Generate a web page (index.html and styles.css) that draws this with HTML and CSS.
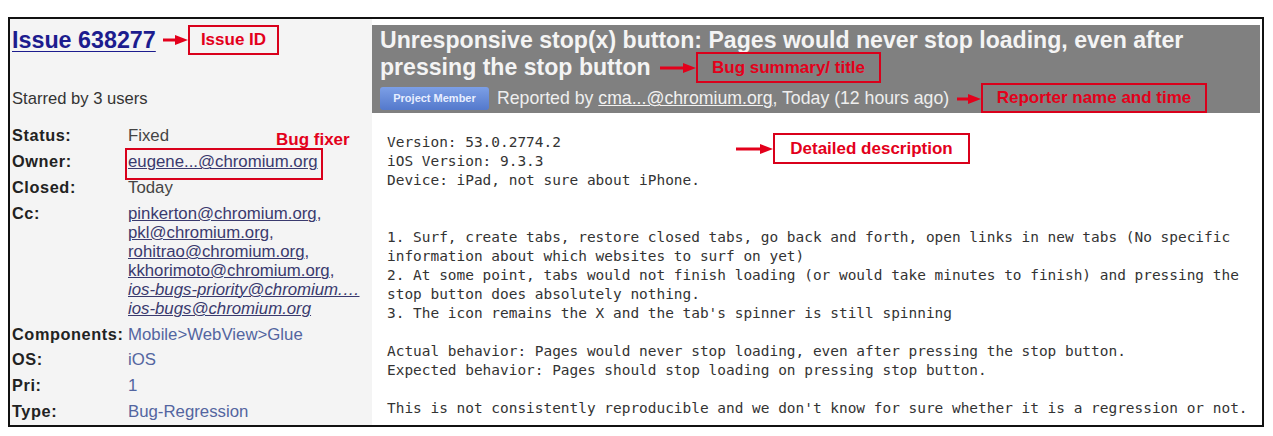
FILE: index.html
```html
<!DOCTYPE html>
<html>
<head>
<meta charset="utf-8">
<link rel="stylesheet" href="styles.css">
</head>
<body>
<div class="frame">
  <div class="side">
    <a class="issue-id" href="#">Issue 638277</a>
    <div class="starred">Starred by 3 users</div>
    <div class="meta">
      <div class="label">Status:</div><div class="val plain">Fixed</div>
      <div class="label">Owner:</div><div class="val"><a href="#">eugene...@chromium.org</a></div>
      <div class="label">Closed:</div><div class="val plain">Today</div>
      <div class="label">Cc:</div>
      <div class="val cc">
        <a href="#">pinkerton@chromium.org</a>,<br>
        <a href="#">pkl@chromium.org</a>,<br>
        <a href="#">rohitrao@chromium.org</a>,<br>
        <a href="#">kkhorimoto@chromium.org</a>,<br>
        <a class="it" href="#">ios-bugs-priority@chromium.…</a><br>
        <a class="it" href="#">ios-bugs@chromium.org</a>
      </div>
      <div class="label">Components:</div><div class="val blue">Mobile&gt;WebView&gt;Glue</div>
      <div class="label">OS:</div><div class="val blue">iOS</div>
      <div class="label">Pri:</div><div class="val blue">1</div>
      <div class="label">Type:</div><div class="val blue">Bug-Regression</div>
    </div>
  </div>
  <div class="main">
    <div class="head">
      <div class="title">Unresponsive stop(x) button: Pages would never stop loading, even after pressing the stop button</div>
      <div class="reported"><span class="badge">Project Member</span><span class="rep">Reported by <a href="#">cma...@chromium.org</a>, Today (12 hours ago)</span></div>
    </div>
    <pre class="desc">Version: 53.0.2774.2
iOS Version: 9.3.3
Device: iPad, not sure about iPhone.


1. Surf, create tabs, restore closed tabs, go back and forth, open links in new tabs (No specific
information about which websites to surf on yet)
2. At some point, tabs would not finish loading (or would take minutes to finish) and pressing the
stop button does absolutely nothing.
3. The icon remains the X and the tab's spinner is still spinning

Actual behavior: Pages would never stop loading, even after pressing the stop button.
Expected behavior: Pages should stop loading on pressing stop button.

This is not consistently reproducible and we don't know for sure whether it is a regression or not.</pre>
  </div>

  <svg class="arrow a-issue" width="25" height="12" viewBox="0 0 25 12"><path d="M0 6H14" stroke="#e3001b" stroke-width="3"/><path d="M12 1L25 6L12 11Z" fill="#e3001b"/></svg>
  <div class="note n-issue">Issue ID</div>

  <svg class="arrow a-summary" width="36" height="12" viewBox="0 0 36 12"><path d="M0 6H25" stroke="#e3001b" stroke-width="3"/><path d="M23 1L36 6L23 11Z" fill="#e3001b"/></svg>
  <div class="note n-summary">Bug summary/ title</div>

  <svg class="arrow a-reporter" width="24" height="12" viewBox="0 0 24 12"><path d="M0 6H13" stroke="#e3001b" stroke-width="3"/><path d="M11 1L24 6L11 11Z" fill="#e3001b"/></svg>
  <div class="note n-reporter">Reporter name and time</div>

  <svg class="arrow a-desc" width="37" height="12" viewBox="0 0 37 12"><path d="M0 6H26" stroke="#e3001b" stroke-width="3"/><path d="M24 1L37 6L24 11Z" fill="#e3001b"/></svg>
  <div class="note n-desc">Detailed description</div>

  <div class="fixer">Bug fixer</div>
  <div class="owner-box"></div>
</div>
</body>
</html>
```
FILE: styles.css
```css
html, body {
  margin: 0;
  padding: 0;
  background: #fff;
}
body {
  font-family: "Liberation Sans", Arial, sans-serif;
  color: #333;
}
.frame {
  position: relative;
  box-sizing: border-box;
  margin: 17px 0 0 8px;
  width: 1256px;
  height: 410px;
  border: 2px solid #111;
  display: flex;
  padding-right: 2px;
  overflow: hidden;
}
.side {
  width: 362px;
  flex: none;
  background: #f4f4f4;
  padding-left: 2px;
  box-sizing: border-box;
}
.issue-id {
  display: block;
  margin-top: 6px;
  height: 30px;
  line-height: 30px;
  font-size: 23.3px;
  font-weight: bold;
  color: #1c1c8e;
  text-decoration: underline;
  text-decoration-thickness: 1px;
  text-underline-offset: 3px;
  width: max-content;
}
.starred {
  margin-top: 34px;
  line-height: 20px;
  font-size: 16.6px;
  color: #333;
}
.meta {
  margin-top: 14px;
  display: grid;
  grid-template-columns: 116px 1fr;
  font-size: 16.8px;
  line-height: 19px;
}
.label, .val {
  padding: 3.4px 0;
}
.label {
  font-weight: bold;
  font-size: 16.3px;
  color: #222;
  letter-spacing: 0.6px;
}
.val {
  color: #4b5a8a;
}
.val.plain {
  color: #444;
}
.val a {
  color: #3a3a6e;
  text-decoration: underline;
  text-decoration-thickness: 1px;
}
.val a.it {
  font-style: italic;
}
.val.cc {
  color: #3a3a6e;
}
.val.blue {
  color: #5365a0;
}
.main {
  flex: 1;
  padding-top: 6px;
  min-width: 0;
}
.head {
  background: #808080;
  height: 88px;
  box-sizing: border-box;
  padding: 2px 0 0 8px;
}
.title {
  font-size: 23.1px;
  font-weight: bold;
  line-height: 27px;
  color: #f4f4f4;
  padding-right: 60px;
}
.reported {
  margin-top: 4px;
  height: 26px;
  line-height: 26px;
  display: flex;
  align-items: center;
}
.rep {
  margin-left: 8px;
  font-size: 17.7px;
  color: #eeeeee;
  white-space: nowrap;
}
.rep a {
  color: #f2f2f2;
  text-decoration: underline;
  text-decoration-thickness: 1px;
}
.badge {
  display: inline-block;
  width: 109px;
  height: 23px;
  line-height: 23px;
  box-sizing: border-box;
  text-align: center;
  font-size: 11px;
  font-weight: bold;
  color: #e8eeff;
  border-radius: 3px;
  background: linear-gradient(#7c9fe6, #5479cc);
}
.desc {
  margin: 20px 0 0 15px;
  font-family: "DejaVu Sans Mono", "Liberation Mono", monospace;
  font-size: 14.45px;
  line-height: 19px;
  color: #333;
}
.arrow {
  position: absolute;
}
.note {
  position: absolute;
  box-sizing: border-box;
  border: 2px solid #d9001b;
  color: #e3001b;
  font-weight: bold;
  font-size: 17px;
  display: flex;
  align-items: center;
  justify-content: center;
  white-space: nowrap;
}
.a-issue { left: 153px; top: 15px; }
.n-issue { left: 178px; top: 6px; width: 91px; height: 30px; }
.a-summary { left: 650px; top: 43px; }
.n-summary { left: 686px; top: 33px; width: 185px; height: 31px; }
.a-reporter { left: 947px; top: 74px; }
.n-reporter { left: 971px; top: 64px; width: 226px; height: 30px; }
.a-desc { left: 726px; top: 124px; }
.n-desc { left: 763px; top: 114px; width: 197px; height: 31px; }
.fixer {
  position: absolute;
  left: 266px;
  top: 109px;
  color: #e3001b;
  font-weight: bold;
  font-size: 17px;
  line-height: 24px;
}
.owner-box {
  position: absolute;
  left: 115px;
  top: 129px;
  width: 198px;
  height: 32px;
  box-sizing: border-box;
  border: 2px solid #d9001b;
}
```
